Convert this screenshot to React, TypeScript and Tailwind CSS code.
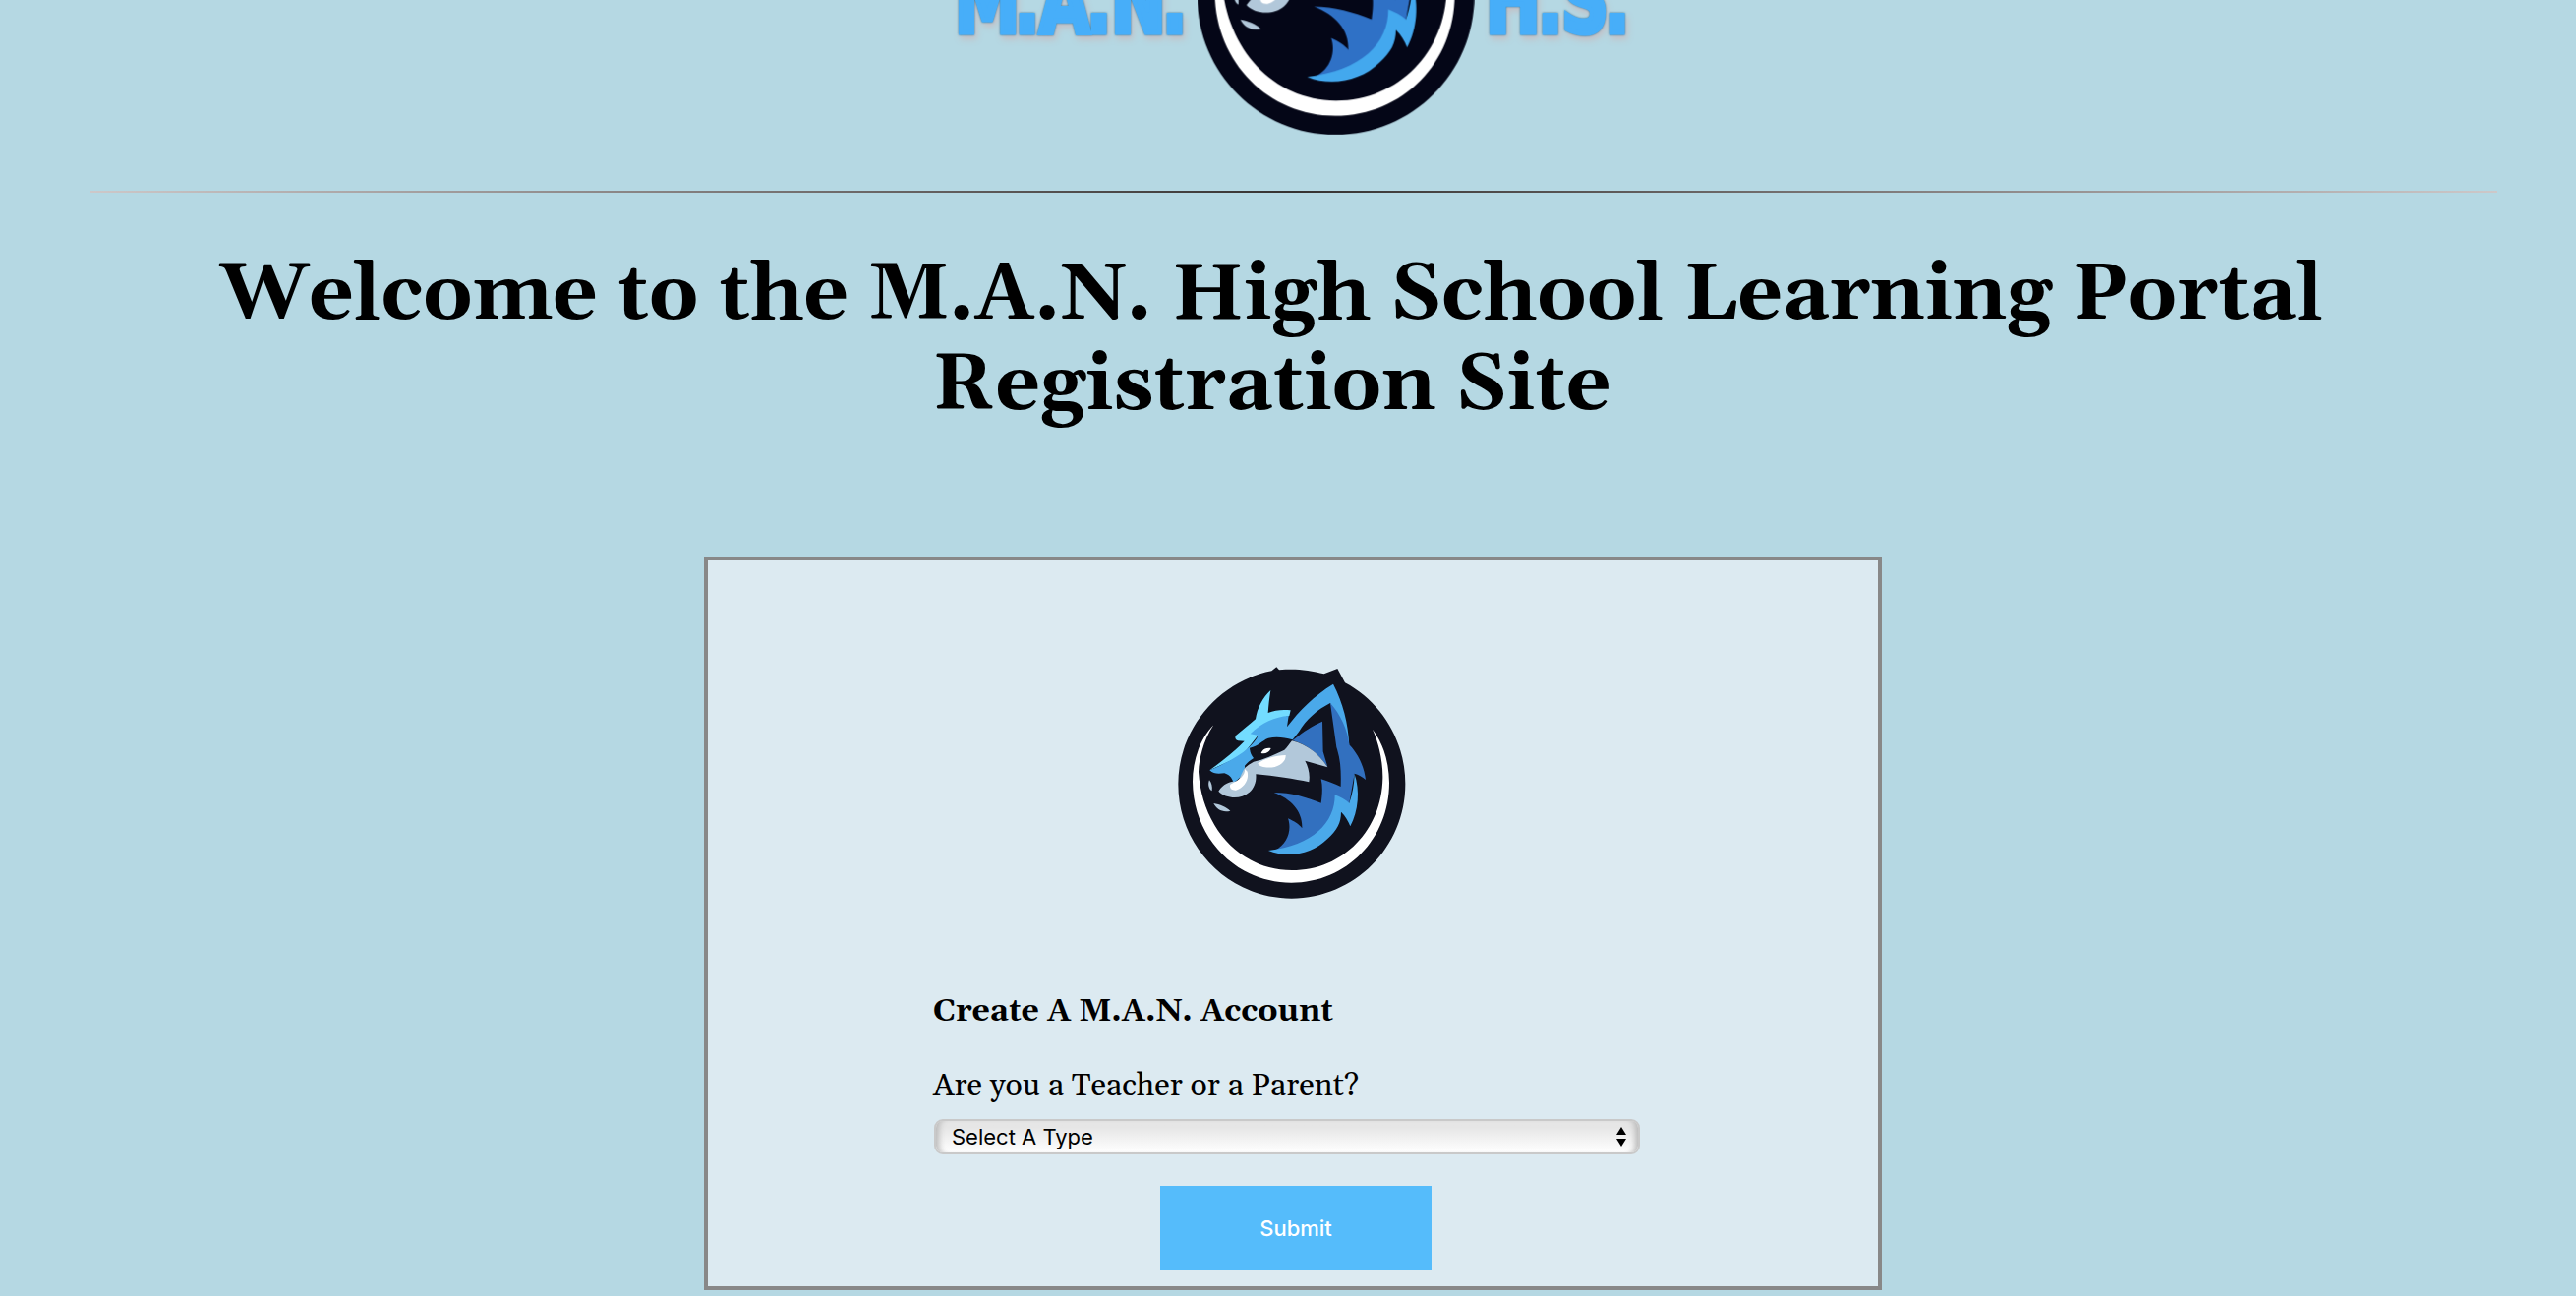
type WolfColors = { dark: string; mid: string; deep: string };

function WolfArt({ dark, mid, deep }: WolfColors) {
  return (
    <>
      <path
        fill={dark}
        d="M401 62 C430 62 470 68 500 76 L541 60 L564 103 C675 162 748 280 748 412 C748 605 593 761 401 761 C210 761 55 605 55 412 C55 245 178 98 340 67 L355 55 L363 64 C375 62 390 62 401 62 Z"
      />
      <path
        fill="#ffffff"
        d="M163 232 C118 278 99 345 99 405 C101 580 235 713 400 713 C570 713 699 578 699 408 C698 345 682 290 648 245 C668 290 680 345 679 395 C676 550 560 675 402 675 C245 675 128 545 117 375 C118 330 136 272 163 232 Z"
      />
      {/* brow and snout highlights */}
      <path
        fill="#73dcff"
        d="M337 126 C312 150 296 180 291 214 L231 264 C227 270 229 278 238 280 L257 281 C225 315 185 345 151 370 L250 325 L300 262 L385 206 L394 204 L398 187 C375 184 350 186 329 195 C331 172 333 150 337 126 Z"
      />
      <path
        fill={mid}
        d="M392 204 C350 207 310 225 275 259 L299 264 C280 305 220 340 151 370 C163 382 178 381 196 379 C217 385 220 400 224 408 C245 395 260 375 258 356 C265 347 275 339 285 333 C278 325 274 315 273 302 C300 296 310 280 330 272 C355 266 380 270 404 277 L423 253 C445 215 480 185 519 165 L555 235 L577 294 C573 225 558 165 528 107 C470 143 425 187 387 238 Z"
      />
      {/* ear and cheek */}
      <path
        fill={deep}
        d="M495 221 C465 234 440 250 404 279 C450 293 485 322 511 360 L497 313 Z"
      />
      <path
        fill="#b2c8da"
        d="M402 280 C395 288 388 300 379 308 C350 322 315 338 285 344 C275 350 262 358 256 366 L237 405 C218 402 195 408 178 434 C200 457 246 460 272 437 C288 423 294 403 292 382 C350 387 410 397 454 406 C458 382 452 360 442 341 L511 361 C485 320 448 291 402 280 Z"
      />
      <path
        fill="#ffffff"
        d="M383 324 C350 325 318 335 298 349 C302 362 330 364 350 360 C372 354 384 340 383 324 Z M258 366 C260 382 248 398 214 413 C210 422 216 432 231 431 C255 424 272 400 266 374 Z M308 318 C312 306 325 300 338 303 C334 314 322 322 308 318 Z"
      />
      <path
        fill="#b2c8da"
        d="M150 400 C145 412 148 428 158 433 C160 420 157 408 150 400 Z M163 471 C172 489 190 500 214 494 C202 482 182 474 163 471 Z"
      />
      {/* neck fur */}
      <path
        fill={deep}
        d="M519 165 L538 300 C552 340 552 380 551 420 C535 412 512 404 491 397 C497 422 494 448 491 470 C445 452 400 438 347 438 C400 458 435 495 433 547 C425 535 408 525 390 517 C402 550 390 595 350 614 C440 612 560 560 552 470 L577 470 L593 380 C605 383 617 390 627 399 C623 360 604 320 577 292 C572 245 550 200 519 165 Z"
      />
      <path
        fill={mid}
        d="M593 382 C592 415 586 445 577 470 C566 460 550 452 533 445 C534 530 465 600 330 615 C390 640 465 625 510 580 C540 553 552 530 552 497 C565 510 574 525 580 541 C605 495 610 430 593 382 Z"
      />
    </>
  );
}

function HeaderLogo() {
  return (
    <svg className="block h-[137px] w-[730px] overflow-hidden" viewBox="950 0 730 137">
      <g
        fill="#47aef9"
        stroke="#47aef9"
        strokeWidth="4"
        fontSize="74"
        fontWeight="700"
        className="font-['DejaVu_Sans_Condensed','DejaVu_Sans',sans-serif] [filter:drop-shadow(0_0_1px_#2c78a4)_drop-shadow(2px_4px_3px_#c3bfc4)]"
      >
        <text transform="translate(0 33) scale(1 1.25)" x="971 1032 1057 1105 1130 1182" y="0">M.A.N.</text>
        <text transform="translate(0 33) scale(1 1.25)" x="1511 1564 1588 1632" y="0">H.S.</text>
      </g>
      <g transform="translate(1195.3 -170) scale(0.4066 0.4035)">
        <WolfArt dark="#040617" mid="#43a8ee" deep="#2f71c6" />
      </g>
    </svg>
  );
}

export default function App() {
  return (
    <div className="flex h-[1318px] w-full flex-col overflow-hidden bg-[#b5d8e3] font-['Gelasio',Georgia,serif] text-black">
      <header className="flex pl-[950px]">
        <HeaderLogo />
      </header>
      <hr className="mt-[57px] mr-[80px] ml-[92px] h-[2px] border-0 bg-linear-to-r/srgb from-[#cdc8c9] via-[#353231] to-[#cdc8c9]" />
      <h1 className="mt-[59px] pr-[33px] text-center text-[80px] leading-[92px] font-bold">
        Welcome to the M.A.N. High School Learning Portal
        <br />
        Registration Site
      </h1>
      <main className="mt-[127px] ml-[716px] flex h-[746px] w-[1198px] shrink-0 flex-col border-4 border-[#888888] bg-[#dceaf1]">
        <svg className="mt-[90px] ml-[460px] size-[270px] shrink-0" viewBox="0 0 810 810">
          <WolfArt dark="#10121e" mid="#4aa9ea" deep="#3270bf" />
        </svg>
        <form className="ml-[229px] flex w-[719px] flex-col" onSubmit={(e) => e.preventDefault()}>
          <h2 className="mt-[80px] text-[32px] leading-[38px] font-bold">Create A M.A.N. Account</h2>
          <label className="mt-[38px] text-[32px] leading-[38px]">Are you a Teacher or a Parent?</label>
          <button
            type="button"
            className="mt-[14px] ml-px flex h-[36px] items-center justify-between rounded-[9px] border-2 border-[#c9c9c9] bg-linear-to-b from-[#e6e6e6] from-20% to-white pr-[12px] pl-[16px] font-['Inter',sans-serif] text-[22px] leading-none shadow-[inset_8px_0_6px_-5px_#b8b8b8,inset_-8px_0_6px_-5px_#b8b8b8]"
          >
            <span>Select A Type</span>
            <svg className="h-[20px] w-[10px]" viewBox="0 0 10 20">
              <path d="M5 0 L10 8 H0 Z M0 12 H10 L5 20 Z" />
            </svg>
          </button>
          <button
            type="submit"
            className="mt-[32px] ml-[231px] h-[86px] w-[276px] bg-[#55bcfb] font-['Inter',sans-serif] text-[22px] font-medium text-white"
          >
            Submit
          </button>
        </form>
      </main>
    </div>
  );
}
